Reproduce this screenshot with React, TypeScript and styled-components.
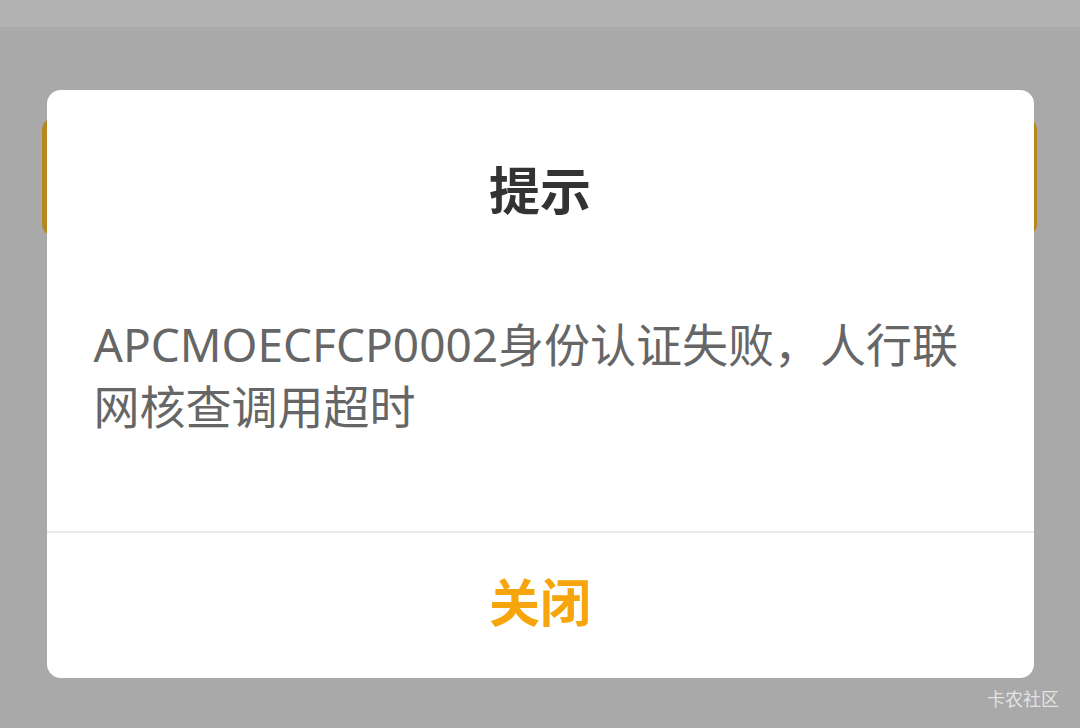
import styled, { createGlobalStyle } from "styled-components";

const GlobalStyle = createGlobalStyle`
  html, body {
    margin: 0;
    padding: 0;
    height: 100%;
    background: #a9a9a9;
    font-family: "Noto Sans CJK SC", "Noto Sans", sans-serif;
  }
  #root {
    height: 100%;
  }
`;

const Screen = styled.div`
  position: relative;
  width: 1080px;
  height: 728px;
  overflow: hidden;
  background: #a9a9a9;
`;

const StatusBar = styled.div`
  height: 27px;
  background: #b3b3b3;
`;

const PageContent = styled.div`
  padding: 91px 43px 0 42px;
`;

const BackCard = styled.div`
  height: 118px;
  border-radius: 12px;
  background: #b6861f;
`;

const Overlay = styled.div`
  position: absolute;
  inset: 0;
  display: flex;
  align-items: flex-start;
  justify-content: center;
  padding-top: 90px;
  padding-left: 12px;
  padding-right: 12px;
  box-sizing: border-box;
`;

const Dialog = styled.div`
  width: 987px;
  height: 588px;
  display: flex;
  flex-direction: column;
  background: #ffffff;
  border-radius: 14px;
  overflow: hidden;
`;

const Title = styled.div`
  padding-top: 68px;
  height: 60px;
  line-height: 60px;
  text-align: center;
  font-size: 51px;
  font-weight: 700;
  color: #333333;
`;

const Message = styled.div`
  margin-top: 95px;
  padding: 0 50px 0 47px;
  font-family: "Noto Sans", "Noto Sans CJK SC", sans-serif;
  font-size: 46px;
  line-height: 62px;
  color: #666666;
  flex: 1;
`;

const Divider = styled.div`
  height: 2px;
  background: #e8e8e8;
`;

const ActionButton = styled.div`
  height: 145px;
  display: flex;
  align-items: center;
  justify-content: center;
  font-size: 51px;
  font-weight: 700;
  color: #f6a50c;
  padding-bottom: 12px;
  box-sizing: border-box;
`;

const Watermark = styled.div`
  position: absolute;
  right: 21px;
  bottom: 20px;
  font-size: 18px;
  line-height: 20px;
  color: #e2e2e2;
`;

export default function App() {
  return (
    <Screen>
      <GlobalStyle />
      <StatusBar />
      <PageContent>
        <BackCard />
      </PageContent>
      <Overlay>
        <Dialog>
          <Title>提示</Title>
          <Message>APCMOECFCP0002身份认证失败，人行联网核查调用超时</Message>
          <Divider />
          <ActionButton>关闭</ActionButton>
        </Dialog>
      </Overlay>
      <Watermark>卡农社区</Watermark>
    </Screen>
  );
}
